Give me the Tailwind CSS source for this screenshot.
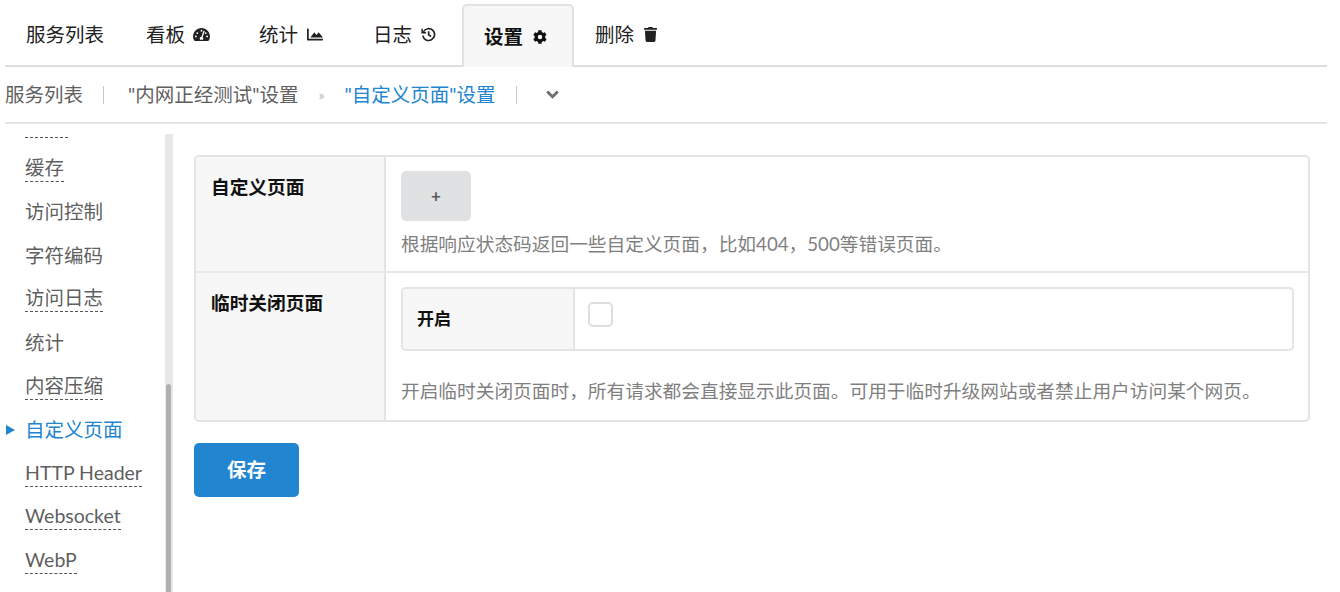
<!DOCTYPE html>
<html lang="zh-CN">
<head>
    <meta charset="UTF-8">
    <title>自定义页面设置</title>
    <script src="https://cdn.jsdelivr.net/npm/@tailwindcss/browser@4"></script>
</head>
<body class="bg-white h-[592px] w-[1340px] overflow-hidden font-['Lato','Noto_Sans_CJK_SC',sans-serif] text-[#212121]">
    <!-- Top tabs -->
    <div class="ml-[5px] mr-[13px] mt-[4px] h-[63px] border-b-2 border-[#dddddd] flex items-stretch text-[19.5px] leading-[28px]">
        <div class="w-[120px] pl-[21px] flex items-center">服务列表</div>
        <div class="w-[113px] pl-[21px] flex items-center gap-[8px]">看板
            <svg class="w-[17px] h-[15px]" viewBox="0 0 576 512" fill="#212121"><path d="M288 32C129 32 0 161 0 320c0 53 14 102 39 145 6 9 16 15 27 15h444c11 0 21-6 27-15 25-43 39-92 39-145C576 161 447 32 288 32zm0 64a32 32 0 1 1 0 64 32 32 0 0 1 0-64zM96 352a32 32 0 1 1 0-64 32 32 0 0 1 0 64zm48-112a32 32 0 1 1 0-64 32 32 0 0 1 0 64zm246-80-62 186c14 12 22 29 22 48 0 15-5 28-14 38H240c-9-10-14-23-14-38 0-34 27-62 61-64l62-186a21 21 0 0 1 41 16zm42 80a32 32 0 1 1 0-64 32 32 0 0 1 0 64zm48 112a32 32 0 1 1 0-64 32 32 0 0 1 0 64z"/></svg>
        </div>
        <div class="w-[113px] pl-[21px] flex items-center gap-[9px]">统计
            <svg class="w-[16px] h-[13px]" viewBox="0 0 512 400" fill="#212121"><path d="M496 336H56V24c0-9-7-16-16-16H16C7 8 0 15 0 24v336c0 18 14 32 32 32h464c9 0 16-7 16-16v-24c0-9-7-16-16-16zM372 126l-67 90-71-90-126 168h404L372 126z"/></svg>
        </div>
        <div class="w-[111px] pl-[22px] flex items-center gap-[9px]">日志
            <svg class="w-[15px] h-[15px]" viewBox="0 0 16 16" fill="none" stroke="#212121" stroke-width="1.8"><path d="M2.6 5.2A6.3 6.3 0 1 1 2 9.2"/><path d="M1.2 1.8v4.2h4.2" stroke-width="1.6"/><path d="M8.2 4.4v4l2.6 1.7"/></svg>
        </div>
        <div class="w-[112px] h-[63px] pl-[20px] flex items-center gap-[10px] bg-[#f7f7f7] border-2 border-b-0 border-[#e2e2e2] rounded-t-[5px] font-bold text-[#111111]">设置
            <svg class="w-[14px] h-[14px]" viewBox="0 0 512 512" fill="#111111"><path d="M487 316l-43-25a195 195 0 0 0 0-70l43-25c5-3 7-9 5-14-11-36-30-68-55-95-4-4-10-5-15-2l-43 25c-18-15-39-27-61-35V25c0-6-4-11-9-12-37-8-75-8-110 0-6 1-10 6-10 12v50c-22 8-43 20-61 35l-43-25c-5-3-11-2-15 2-25 27-44 59-55 95-2 5 0 11 5 14l43 25a195 195 0 0 0 0 70l-43 25c-5 3-7 9-5 14 11 36 30 68 55 95 4 4 10 5 15 2l43-25c18 15 39 27 61 35v50c0 6 4 11 10 12 37 8 75 8 110 0 5-1 9-6 9-12v-50c22-8 43-20 61-35l43 25c5 3 11 2 15-2 25-27 44-59 55-95 2-5 0-11-5-14zM256 336a80 80 0 1 1 0-160 80 80 0 0 1 0 160z"/></svg>
        </div>
        <div class="pl-[21px] flex items-center gap-[10px]">删除
            <svg class="w-[13px] h-[15px]" viewBox="0 0 448 512" fill="#212121"><path d="M432 32H312l-9-19a24 24 0 0 0-22-13H167a24 24 0 0 0-21 13l-9 19H16A16 16 0 0 0 0 48v32a16 16 0 0 0 16 16h416a16 16 0 0 0 16-16V48a16 16 0 0 0-16-16zM53 467a48 48 0 0 0 48 45h246a48 48 0 0 0 48-45l21-339H32z"/></svg>
        </div>
    </div>

    <!-- Breadcrumb -->
    <div class="ml-[5px] mr-[13px] h-[57px] border-b-2 border-[#e5e5e5] flex items-center text-[19.5px] text-[#5f5f5f]">
        <span>服务列表</span>
        <span class="ml-[20px] w-[1px] h-[18px] bg-[#c8c8c8]"></span>
        <span class="ml-[24px]">"内网正经测试"设置</span>
        <span class="ml-[20px] text-[14px] text-[#b5b5b5]">»</span>
        <span class="ml-[20px] text-[#2185d0]">"自定义页面"设置</span>
        <span class="ml-[21px] w-[1px] h-[18px] bg-[#c8c8c8]"></span>
        <svg class="ml-[29px] w-[13px] h-[9px]" viewBox="0 0 13 9" fill="none" stroke="#6e6e6e" stroke-width="2.8"><path d="M1.2 1.5 6.5 6.8 11.8 1.5"/></svg>
    </div>

    <div class="flex h-[468px]">
        <!-- Side menu -->
        <div class="relative w-[168px] ml-[5px] mt-[10px] h-[458px] overflow-hidden text-[19.5px] text-[#5f5f5f] leading-[28px] shrink-0">
            <div class="-mt-[23px] pl-[20px] flex flex-col gap-[16.6px] items-start">
                <span class="border-b border-dashed border-[#555555] leading-[26px] text-transparent">------</span>
                <span class="border-b border-dashed border-[#555555] leading-[26px]">缓存</span>
                <span class="leading-[27px]">访问控制</span>
                <span class="leading-[27px]">字符编码</span>
                <span class="border-b border-dashed border-[#555555] leading-[26px]">访问日志</span>
                <span class="leading-[27px]">统计</span>
                <span class="border-b border-dashed border-[#555555] leading-[26px]">内容压缩</span>
                <span class="relative leading-[27px] text-[#2185d0]"><span class="absolute -left-[19px] top-[9px] w-0 h-0 border-y-[5px] border-y-transparent border-l-[9px] border-l-[#2185d0]"></span>自定义页面</span>
                <span class="border-b border-dashed border-[#555555] leading-[26px]">HTTP Header</span>
                <span class="border-b border-dashed border-[#555555] leading-[26px]">Websocket</span>
                <span class="border-b border-dashed border-[#555555] leading-[26px]">WebP</span>
            </div>
            <!-- scrollbar -->
            <div class="absolute right-0 top-0 bottom-0 w-[8px] bg-[#e8e8e8]">
                <div class="ml-[1px] mt-[250px] w-[5px] h-[220px] rounded-t-[3px] bg-[#b0b0b0]"></div>
            </div>
        </div>

        <!-- Main form -->
        <div class="ml-[21px] w-[1116px] pt-[31px]">
            <div class="border-2 border-[#e4e4e4] rounded-[5px] text-[18.7px] overflow-hidden">
                <div class="flex h-[116px] border-b-2 border-[#e9e9e9]">
                    <div class="w-[190px] shrink-0 bg-[#f7f7f7] border-r-2 border-[#e4e4e4] pl-[15px] pt-[16px] font-bold text-[#111111] leading-[28px]">自定义页面</div>
                    <div class="flex-1 pl-[15px] pt-[14px]">
                        <div class="w-[70px] h-[50px] bg-[#e0e1e2] rounded-[5px] flex items-center justify-center text-[#5a5a5a] font-bold text-[17px]">+</div>
                        <div class="mt-[9px] text-[#7f7f7f] leading-[28px]">根据响应状态码返回一些自定义页面，比如404，500等错误页面。</div>
                    </div>
                </div>
                <div class="flex h-[147px]">
                    <div class="w-[190px] shrink-0 bg-[#f7f7f7] border-r-2 border-[#e4e4e4] pl-[15px] pt-[16px] font-bold text-[#111111] leading-[28px]">临时关闭页面</div>
                    <div class="flex-1 pl-[15px] pt-[14px]">
                        <div class="w-[893px] h-[64px] border-2 border-[#e4e4e4] rounded-[5px] flex overflow-hidden">
                            <div class="w-[172px] bg-[#f7f7f7] border-r-2 border-[#e4e4e4] pl-[14px] flex items-center font-bold text-[17px] text-[#111111]">开启</div>
                            <div class="flex-1 pl-[13px] pt-[13px]"><div class="w-[25px] h-[25px] bg-white border-2 border-[#dedede] rounded-[5px]"></div></div>
                        </div>
                        <div class="mt-[26px] text-[#7f7f7f] leading-[28px] whitespace-nowrap">开启临时关闭页面时，所有请求都会直接显示此页面。可用于临时升级网站或者禁止用户访问某个网页。</div>
                    </div>
                </div>
            </div>
            <div class="mt-[21px] w-[105px] h-[54px] bg-[#2185d0] rounded-[5px] flex items-center justify-center text-white font-bold text-[19.5px]">保存</div>
        </div>
    </div>
</body>
</html>
